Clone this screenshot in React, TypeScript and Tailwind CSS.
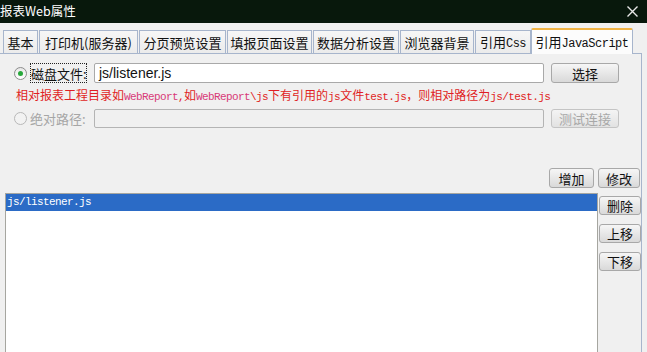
import React from "react";

const cjk = "font-['Noto_Sans_CJK_SC',sans-serif]";
const mono = "font-['Liberation_Mono',monospace]";

function Btn({ children, disabled, className = "" }: { children: React.ReactNode; disabled?: boolean; className?: string }) {
  return (
    <div
      className={`flex items-center justify-center rounded-[3px] border ${
        disabled
          ? "border-[#c4c4c4] bg-linear-to-b from-[#f4f4f4] to-[#e2e2e2] text-[#a8a8a8]"
          : "border-[#a8a8a8] bg-linear-to-b from-[#f6f6f6] to-[#d9d9d9] text-[#111]"
      } text-[13px] leading-none ${cjk} ${className}`}
    >
      <span>{children}</span>
    </div>
  );
}

function Radio({ checked, disabled }: { checked?: boolean; disabled?: boolean }) {
  return (
    <div
      className={`flex h-[13px] w-[13px] items-center justify-center rounded-full border ${
        disabled ? "border-[#b8b8b8] bg-[#f2f2f2]" : "border-[#8c8c8c] bg-linear-to-b from-[#e8e8e8] to-[#ffffff]"
      }`}
    >
      {checked && <div className="h-[5px] w-[5px] rounded-full bg-[#27a83a]" />}
    </div>
  );
}

export default function App() {
  const tabBase = `flex h-[23px] items-center justify-center whitespace-nowrap border border-b-0 border-[#a7b5cc] bg-linear-to-b from-[#f6f6f6] to-[#ebebeb] text-[13px] text-[#111] leading-none ${cjk}`;
  const m = `${mono} text-[11px] tracking-[-0.6px]`;
  return (
    <div className={`h-[352px] w-[647px] overflow-hidden bg-[#f0f0f0] ${cjk}`}>
      {/* title bar */}
      <div className="flex h-[23px] items-center justify-between bg-[#08180c] pr-[9px]">
        <span className="text-[12.5px] leading-none text-white">报表Web属性</span>
        <svg width="11" height="11" viewBox="0 0 11 11">
          <path d="M0.5 0.5 L10.5 10.5 M10.5 0.5 L0.5 10.5" stroke="#e8e8e8" strokeWidth="1.4" />
        </svg>
      </div>

      {/* tabs */}
      <div className="flex h-[30px] items-end gap-[1px] pl-[3px]">
        <div className={`${tabBase} w-[35px]`}>基本</div>
        <div className={`${tabBase} w-[99px]`}>打印机(服务器)</div>
        <div className={`${tabBase} w-[87px]`}>分页预览设置</div>
        <div className={`${tabBase} w-[85px]`}>填报页面设置</div>
        <div className={`${tabBase} w-[86px]`}>数据分析设置</div>
        <div className={`${tabBase} w-[74px]`}>浏览器背景</div>
        <div className={`${tabBase} w-[56px]`}>
          <span>
            引用<span className={`${mono} text-[12px] tracking-[-0.6px]`}>Css</span>
          </span>
        </div>
        <div
          className={`relative z-10 -mb-px -ml-[1px] flex h-[26px] w-[102px] items-center justify-center whitespace-nowrap rounded-t-[2px] border border-b-0 border-t-2 border-[#a7b5cc] border-t-[#f0b445] bg-[#fcfcfc] text-[13px] leading-none text-[#111] ${cjk}`}
        >
          <span>
            引用<span className={`${mono} text-[12px] tracking-[-0.5px]`}>JavaScript</span>
          </span>
        </div>
      </div>

      {/* panel */}
      <div className="flex h-[299px] w-[642px] flex-col border-r border-t border-[#a7b5cc] pt-[9px]">
        {/* row 1 */}
        <div className="flex h-[20px] items-center">
          <div className="ml-[14px]">
            <Radio checked />
          </div>
          <div className="ml-[3px] flex h-[20px] w-[57px] items-center whitespace-nowrap border border-dotted border-[#222] text-[13px] leading-none text-[#111]">
            <span>磁盘文件:</span>
          </div>
          <div className="ml-[7px] flex h-[20px] w-[450px] items-center rounded-[2px] border border-[#a9a9a9] bg-white pl-[4px] font-['Liberation_Sans',sans-serif] text-[14px] leading-none text-[#111]">
            js/listener.js
          </div>
          <Btn className="ml-[7px] h-[20px] w-[68px]">选择</Btn>
        </div>

        {/* hint */}
        <div className="flex h-[26px] items-center whitespace-nowrap pl-[16px] text-[12px] leading-none text-[#e01e24]">
          <span>
            相对报表工程目录如<span className={`${m} text-[#d83a78]`}>WebReport</span>
            <span className={m}>,</span>如<span className={`${m} text-[#d83a78]`}>WebReport</span>
            <span className={m}>\js</span>下有引用的<span className={m}>js</span>文件<span className={m}>test.js</span>，则相对路径为
            <span className={m}>js/test.js</span>
          </span>
        </div>

        {/* row 2 */}
        <div className="flex h-[19px] items-center">
          <div className="ml-[14px]">
            <Radio disabled />
          </div>
          <div className="ml-[3px] flex h-[19px] w-[57px] items-center whitespace-nowrap text-[13px] leading-none text-[#a6a6a6]">
            <span>绝对路径:</span>
          </div>
          <div className="ml-[7px] h-[19px] w-[450px] rounded-[2px] border border-[#b4b4b4] bg-[#f0f0f0]" />
          <Btn disabled className="ml-[7px] h-[19px] w-[68px]">
            测试连接
          </Btn>
        </div>

        {/* add / edit */}
        <div className="mt-[40px] flex h-[20px] items-center justify-end gap-[4px] pr-[1px]">
          <Btn className="h-[20px] w-[45px]">增加</Btn>
          <Btn className="h-[20px] w-[42px]">修改</Btn>
        </div>

        {/* list + side buttons */}
        <div className="mt-[5px] flex flex-1">
          <div className="ml-[5px] w-[593px] border-l border-r border-t border-[#a6a6a0] bg-white">
            <div className={`flex h-[17px] items-center bg-[#2b6bc6] pl-[1px] text-[11px] leading-none tracking-[-0.6px] text-white ${mono}`}>
              js/listener.js
            </div>
          </div>
          <div className="flex w-[43px] flex-col gap-[9px] pl-[1px] pt-[3px]">
            <Btn className="h-[19px] w-[42px]">删除</Btn>
            <Btn className="h-[19px] w-[42px]">上移</Btn>
            <Btn className="h-[19px] w-[42px]">下移</Btn>
          </div>
        </div>
      </div>
    </div>
  );
}
